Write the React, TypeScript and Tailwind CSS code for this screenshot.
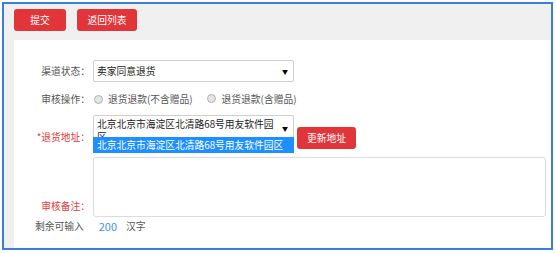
import React from "react";

const font = { fontFamily: '"Noto Sans CJK SC", "Noto Sans", sans-serif' };

function Radio() {
  return <span className="inline-block w-[9px] h-[9px] rounded-full border border-[#b0b0b0] bg-[#e4e4e4] shrink-0" />;
}

export default function App() {
  return (
    <div className="w-[556px] h-[253px] bg-white pt-[2px] pl-[2px]" style={font}>
      <div className="w-[551px] h-[248px] border-2 border-[#3b7fd6] bg-[#f0f0f0] flex flex-col text-[9.75px] leading-[13px]">
        <div className="h-[36px] shrink-0 flex items-start pt-[5px] pl-[10px] gap-[11px]">
          <button className="w-[52px] h-[22px] rounded-[3px] bg-[#e2353a] text-white flex items-center justify-center">提交</button>
          <button className="w-[60px] h-[22px] rounded-[3px] bg-[#e2353a] text-white flex items-center justify-center">返回列表</button>
        </div>
        <div className="flex-1 ml-[10px] bg-white flex flex-col pt-[20px] text-[#555]">
          <div className="flex items-center h-[22px]">
            <div className="w-[76px] text-right">渠道状态：</div>
            <div className="ml-[3px] w-[201px] h-[22px] border border-[#cfcfcf] rounded-[2px] flex items-center justify-between pl-[3px] pr-[5px] text-[#222]">
              <span>卖家同意退货</span>
              <span className="text-[6px] text-black">▼</span>
            </div>
          </div>
          <div className="flex items-center h-[22px] mt-[6px]">
            <div className="w-[76px] text-right">审核操作：</div>
            <div className="ml-[4px] flex items-center">
              <Radio />
              <span className="ml-[5px]">退货退款(不含赠品)</span>
              <span className="ml-[14px]"><Radio /></span>
              <span className="ml-[6px]">退货退款(含赠品)</span>
            </div>
          </div>
          <div className="flex items-start mt-[5px]">
            <div className="w-[76px] text-right text-[#e4393c] mt-[16px]">*退货地址：</div>
            <div className="ml-[3px] w-[201px] flex flex-col">
              <div className="h-[22px] border border-[#cfcfcf] border-b-0 rounded-t-[2px] flex items-start justify-between pl-[3px] pr-[5px] pt-[2px] overflow-hidden text-[#222]">
                <span className="flex flex-col">
                  <span>北京北京市海淀区北清路68号用友软件园</span>
                  <span>区</span>
                </span>
                <span className="text-[6px] text-black mt-[4px]">▼</span>
              </div>
              <div className="h-[16px] bg-[#1e8fff] text-white pl-[4px] flex items-center">北京北京市海淀区北清路68号用友软件园区</div>
            </div>
            <button className="ml-[3px] mt-[12px] w-[59px] h-[22px] rounded-[3px] bg-[#e2353a] text-white flex items-center justify-center">更新地址</button>
          </div>
          <div className="flex items-end mt-[4px]">
            <div className="w-[76px] text-right text-[#e4393c] mb-[4px]">审核备注：</div>
            <div className="ml-[3px] w-[453px] h-[60px] border border-[#dcdcdc] rounded-[3px]" />
          </div>
          <div className="flex items-center h-[16px] mt-[1px] pl-[21px]">
            <span>剩余可输入</span>
            <span className="ml-[15px] text-[#4a8fe0] text-[11px]">200</span>
            <span className="ml-[9px]">汉字</span>
          </div>
        </div>
      </div>
    </div>
  );
}
